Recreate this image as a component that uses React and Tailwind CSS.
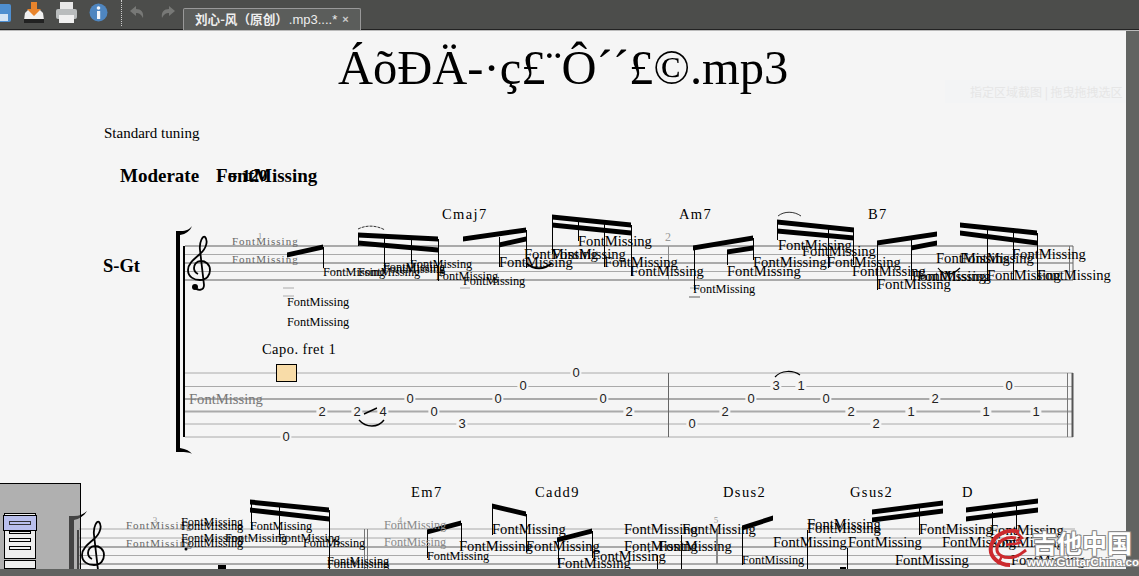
const S = 'S', L = 'L';
const texts = [
  // row 1
  [323,272,S],[358,272,S],[383,269,S],[383,267,S],[410,264,S],[436,276,S],[463,281,S],[287,302,S],[287,322,S],
  [578,241,L],[524,254,L],[552,254,L],[499,262,L],[604,262,L],[630,271,L],[727,271,L],[753,262,L],[693,289,S],
  [778,245,L],[802,251,L],[827,262,L],[852,271,L],[877,284,L],[912,276,L],[917,276,L],[936,258,L],[960,258,L],[1012,254,L],[987,275,L],[1037,275,L],
  // row 2
  [181,522,S],[181,526,S],[181,538,S],[181,543,S],[225,538,S],[250,526,S],[278,538,S],[303,543,S],[327,561,S],[327,564,S],
  [427,556,S],[492,529,L],[459,546,L],[526,546,L],[557,563,L],[592,556,L],[624,529,L],[682,529,L],[624,546,L],[658,546,L],[742,560,S],
  [773,542,L],[807,524,L],[807,528,L],[848,542,L],[895,560,L],[919,529,L],[942,542,L],[990,530,L],[990,542,L],[1011,560,L],
];
const grayTexts = [[189,399,'text-[14.6px] text-[#777]'],[384,525,'text-[12.3px] text-[#888]'],[384,542,'text-[12.3px] text-[#888]']];
const monoTexts = [[232,241],[232,259],[126,525],[126,543]];
const chords = [['Cmaj7',442,214],['Am7',679,214],['B7',868,214],['Em7',411,492],['Cadd9',535,492],['Dsus2',723,492],['Gsus2',850,492],['D',962,492]];
const frets = [
  ['0',576,372],['0',523,385],['0',410,398],['0',498,398],['0',603,398],['2',322,411],['2',357,411],['4',383,411],['0',434,411],['2',629,411],['3',462,423],['0',286,436],
  ['3',776,385],['1',801,385],['0',751,398],['0',826,398],['2',725,411],['0',692,423],['2',851,411],['2',876,423],['1',911,411],['2',935,398],['1',986,411],['1',1036,411],['0',1009,385],
];
const beams = [
  [287,255,323,247],[358,235,438,239],[358,243,438,250],[463,239,526,230],[499,245,526,239],[552,217,631,225],[552,225,631,233],
  [693,248,753,238],[727,252,753,248],[777,222,854,230],[777,231,854,238],[877,243,937,234],[911,248,937,243],[960,225,1037,233],[960,233,1037,243],
  [250,502,329,510],[250,510,329,519],[427,532,461,523],[492,506,526,514],[557,540,592,531],[742,528,773,518],
  [872,512,943,503],[872,520,943,511],[966,510,1038,501],[966,519,1038,510],
];
const stems = [
  [323,247,268],[358,235,246],[384,238,268],[411,240,264],[438,239,281],[499,237,267],[526,230,268],[552,217,254],[578,220,241],[604,222,267],[631,225,276],
  [694,248,290],[727,250,265],[753,238,260],[777,222,240],[828,227,268],[853,230,265],[877,243,290],[911,240,280],[987,230,280],[1013,231,280],[1037,233,280],
  [251,502,530],[279,506,535],[329,510,569],[427,532,558],[461,523,550],[492,506,535],[526,514,552],[558,540,565],[592,531,558],[657,555,569],[681,535,569],[742,528,565],[919,507,535],[992,512,535],[1016,505,535],[807,530,569],[847,548,569],
];
const staff1 = [[246,1.8],[254.5,1],[263,1.8],[271.5,1],[280,1.8]];
const tab = [[373,1],[386.5,1],[399,1.8],[411.5,1.8],[424,1],[437,1]];
const staff2 = [[529,1.2],[538,1],[547,1.8],[555.5,1],[564,1.8]];
const clef = 'M195 287C197 291 204 291 204 285L200 250C199 242 203 235 205 237C208 240 207 248 200 254C193 260 188 264 188 270C188 277 194 280 200 280C207 280 210 275 210 270C210 264 205 261 201 261C196 261 194 265 194 268C194 271 196 273 198 274';

function At({ x, y, className = '', children, center }) {
  return (
    <span
      className={`absolute whitespace-nowrap leading-none ${center ? '-translate-x-1/2 -translate-y-1/2' : '-translate-y-1/2'} ${className}`}
      style={{ left: x, top: y - 31 }}
    >
      {children}
    </span>
  );
}

function Score() {
  return (
    <svg className="absolute left-0 top-0" width="1126" height="538" viewBox="0 31 1126 538" fill="none">
      {staff1.map(([y, w]) => <line key={y} x1="185" x2="1073" y1={y} y2={y} stroke="#aaa" strokeWidth={w} />)}
      {tab.map(([y, w]) => <line key={y} x1="185" x2="1073" y1={y} y2={y} stroke="#aaa" strokeWidth={w} />)}
      {staff2.map(([y, w]) => <line key={y} x1="79" x2="1075" y1={y} y2={y} stroke="#aaa" strokeWidth={w} />)}
      {/* brackets */}
      <path d="M176 231H181C186 231 190 229 192 226C190 231 186 234 180 235V448C186 449 190 451 192 454C189 452 184 452 176 452Z" fill="#000" />
      <rect x="183" y="246" width="2" height="191" fill="#000" />
      <path d="M69 516H74C79 516 84 514 87 511C84 516 79 519 74 520V569H69Z" fill="#000" />
      <rect x="77" y="530" width="2" height="39" fill="#000" />
      {/* clefs */}
      <path d={clef} stroke="#000" strokeWidth="1.8" />
      <circle cx="195" cy="287" r="3" fill="#000" />
      <g transform="translate(-106 285)">
        <path d={clef} stroke="#000" strokeWidth="1.8" />
      </g>
      {/* bar lines */}
      <line x1="668.5" x2="668.5" y1="373" y2="437" stroke="#666" />
      <line x1="668.5" x2="668.5" y1="246" y2="280" stroke="#888" />
      <line x1="1067.5" x2="1067.5" y1="373" y2="437" stroke="#777" />
      <line x1="1072.5" x2="1072.5" y1="373" y2="437" stroke="#555" strokeWidth="2" />
      <line x1="1069.5" x2="1069.5" y1="246" y2="280" stroke="#777" />
      <line x1="1073" x2="1073" y1="246" y2="280" stroke="#666" />
      <line x1="364.5" x2="364.5" y1="529" y2="569" stroke="#777" />
      <line x1="367.5" x2="367.5" y1="529" y2="569" stroke="#777" />
      <line x1="717" x2="717" y1="529" y2="564" stroke="#888" strokeWidth="2" />
      {/* ledger lines */}
      {[[283,294,288],[283,294,296],[460,470,288],[690,700,288]].map(([a, b, y]) => <line key={a + '' + y} x1={a} x2={b} y1={y} y2={y} stroke="#aaa" />)}
      <line x1="689" x2="700" y1="297" y2="297" stroke="#aaa" strokeWidth="2" />
      {/* stems */}
      {stems.map(([x, a, b]) => <line key={x + '-' + a} x1={x + 0.5} x2={x + 0.5} y1={a} y2={b} stroke="#000" />)}
      {/* beams */}
      {beams.map(([a, b, c, d]) => <polygon key={a + '-' + b} points={`${a},${b - 2.5} ${c},${d - 2.5} ${c},${d + 2.5} ${a},${b + 2.5}`} fill="#000" />)}
      {/* ties */}
      <path d="M358 229C366 225 376 225 385 230" stroke="#000" strokeWidth="0.8" strokeDasharray="3 1" />
      <path d="M778 216C784 211 794 211 801 216" stroke="#000" strokeWidth="0.8" />
      <path d="M775 377C781 370 793 370 800 375" stroke="#000" strokeWidth="1.2" />
      <path d="M359 420C366 428 378 428 384 420" stroke="#000" strokeWidth="1.4" />
      <path d="M364 414L377 408" stroke="#000" strokeWidth="1.4" />
      <path d="M526 263C534 270 544 270 552 263" stroke="#000" strokeWidth="2" />
      <path d="M938 268C944 276 952 276 960 268" stroke="#000" strokeWidth="1.2" />
      {/* rests and dots */}
      <rect x="218" y="565" width="8" height="4" fill="#000" />
      <rect x="840" y="567" width="6" height="2" fill="#000" />
      <circle cx="186" cy="549" r="1.5" fill="#000" />
    </svg>
  );
}

function FileBox() {
  return (
    <div className="absolute left-0 bottom-0 h-[86px] w-[81px] border-t border-r border-black bg-[#797979]/[0.56]">
      <div className="absolute left-[4px] top-[29px] flex h-[46px] w-[32px] flex-col items-center gap-[4px] border border-black bg-[#eeeeee] pt-[17px]">
        <div className="h-[3px] w-[22px] border border-black" />
        <div className="h-[4px] w-[22px] border border-black" />
        <div className="h-[4px] w-[22px] border border-black" />
      </div>
      <div className="absolute left-[3px] top-[31px] flex h-[16px] w-[34px] items-center justify-center border border-black bg-[#b9bfec]">
        <div className="h-[4px] w-[22px] border border-[#333]" />
      </div>
      <div className="absolute left-[4px] bottom-0 h-[9px] w-[32px] border border-black bg-[#eeeeee]" />
    </div>
  );
}

function Logo() {
  return (
    <div className="absolute left-[986px] top-[526px] h-[44px] w-[150px]">
      <svg className="absolute left-0 top-0" width="48" height="44" viewBox="0 0 48 44" fill="none">
        <path d="M33 6C21 2 7 9 5 21C3 31 13 39 24 39" stroke="#cc2a2e" strokeWidth="4" />
        <path d="M30 12C20 10 12 15 11 22C10 29 18 33 28 31C33 30 36 27 40 24" stroke="#cc2a2e" strokeWidth="3" />
        <path d="M20 19C25 17 31 19 35 16M30 6L36 12L30 15M16 30L12 38" stroke="#cc2a2e" strokeWidth="2.5" />
      </svg>
      <span className="absolute left-[46px] top-[1px] whitespace-nowrap font-['Noto_Sans_CJK_SC',sans-serif] text-[25px] font-bold leading-[30px] text-white [text-shadow:1px_1px_0_#888,-1px_-1px_0_#888,1px_-1px_0_#888,-1px_1px_0_#888]">吉他中国</span>
      <span className="absolute left-[41px] top-[30px] whitespace-nowrap font-['Liberation_Sans',sans-serif] text-[11.5px] font-bold leading-[12px] text-white [text-shadow:1px_1px_0_#888,-1px_-1px_0_#888,1px_-1px_0_#888,-1px_1px_0_#888]">www.GuitarChina.com</span>
    </div>
  );
}

function Toolbar() {
  return (
    <div className="flex h-[30px] items-start bg-[#4c4d4b] border-b border-[#222]">
      <svg className="mt-[3px]" width="12" height="20" viewBox="0 0 12 20">
        <rect x="-6" y="1" width="17" height="18" rx="2" fill="#4f8fd0" />
        <rect x="-4" y="11" width="12" height="7" fill="#d5e4f4" />
      </svg>
      <svg className="ml-[11px] mt-[1px]" width="22" height="23" viewBox="0 0 22 23">
        <path d="M2 12L5 9H17L20 12L21 19H1Z" fill="#f1f1f1" />
        <rect x="1" y="18" width="20" height="4" fill="#222" />
        <path d="M8 1H14V8H18L11 15L4 8H8Z" fill="#e8842c" />
      </svg>
      <svg className="ml-[10px] mt-[1px]" width="23" height="23" viewBox="0 0 23 23">
        <rect x="5" y="1" width="13" height="8" fill="#e8e8e8" />
        <rect x="1" y="8" width="21" height="10" rx="2" fill="#b9bcbd" />
        <rect x="4" y="14" width="15" height="8" fill="#f0f0f0" />
      </svg>
      <svg className="ml-[11px] mt-[3px]" width="19" height="19" viewBox="0 0 19 19">
        <circle cx="9.5" cy="9.5" r="9" fill="#4f86c0" />
        <circle cx="9.5" cy="5" r="1.8" fill="#f4f6fa" />
        <rect x="8" y="8" width="3.2" height="8" fill="#f4f6fa" />
      </svg>
      <div className="ml-[13px] h-[26px] w-0 border-l border-dotted border-[#cccccc]" />
      <svg className="ml-[7px] mt-[5px]" width="16" height="14" viewBox="0 0 16 14">
        <path d="M7 1L1 6L7 11V8C10 8 12 9 14 13C15 7 12 4 7 4Z" fill="#777876" />
      </svg>
      <svg className="ml-[15px] mt-[5px]" width="16" height="14" viewBox="0 0 16 14">
        <path d="M9 1L15 6L9 11V8C6 8 4 9 2 13C1 7 4 4 9 4Z" fill="#777876" />
      </svg>
      <div className="ml-[7px] mt-[8px] flex h-[22px] w-[178px] items-center rounded-t-[2px] border border-b-0 border-[#999] bg-[#5b5d5b] pl-[11px] text-[13px] text-[#eeeeee] font-['Liberation_Sans','Noto_Sans_CJK_SC',sans-serif]">
        <span className="text-[12.6px] font-bold font-['Noto_Sans_CJK_SC',sans-serif]">刘心-风（原创）</span>
        <span className="ml-[1px]">.mp3....*</span>
        <span className="ml-[5px] text-[11px] font-bold text-[#cccccc]">×</span>
      </div>
    </div>
  );
}

export default function App() {
  return (
    <div className="relative flex h-[576px] w-[1139px] flex-col overflow-hidden bg-[#616361] font-['Liberation_Serif',serif]">
      <Toolbar />
      <div className="h-[1px] bg-[#bbbbbb]" />
      <div className="flex flex-1">
        <div className="relative flex-1 overflow-hidden bg-[#f5f5f5] text-black">
          <Score />
          <div className="absolute left-[945px] top-[49px] flex h-[23px] w-[181px] items-center bg-[#f3f4f5] pl-[25px] font-['Noto_Sans_CJK_SC',sans-serif] text-[12px] text-[#e6e6e6] whitespace-nowrap">指定区域截图 | 拖曳拖拽选区</div>

          <At x={338} y={68} className="text-[48.5px]">ÁõÐÄ-·ç£¨Ô´´£©.mp3</At>
          <At x={104} y={133} className="text-[15px]">Standard tuning</At>
          <At x={120} y={175} className="text-[19px] font-bold">Moderate</At>
          <At x={216} y={175} className="text-[19px] font-bold">FontMissing</At>
          <At x={228} y={175} className="text-[17px] font-bold">= 120</At>
          <At x={103} y={266} className="text-[18.5px] font-bold">S-Gt</At>
          <At x={262} y={349} className="text-[14.5px] tracking-[0.45px]">Capo. fret 1</At>
          <At x={668} y={237} center className="text-[12px] text-[#999]">2</At>
          <At x={260} y={236} center className="text-[9px] text-[#999]">1</At>
          <At x={155} y={520} center className="text-[9px] text-[#999]">3</At>
          <At x={400} y={520} center className="text-[9px] text-[#999]">4</At>
          <At x={716} y={520} center className="text-[9px] text-[#999]">5</At>

          {chords.map(([t, x, y]) => (
            <At key={t} x={x} y={y} className="text-[14.5px] tracking-[1.4px]">{t}</At>
          ))}
          {monoTexts.map(([x, y]) => (
            <At key={x + '-' + y} x={x} y={y} className="text-[11px] tracking-[1px] text-[#666]">FontMissing</At>
          ))}
          {grayTexts.map(([x, y, c]) => (
            <At key={x + '-' + y} x={x} y={y} className={c}>FontMissing</At>
          ))}
          {texts.map(([x, y, s]) => (
            <At key={x + '-' + y} x={x} y={y} className={s === L ? 'text-[14.6px]' : 'text-[12.3px]'}>FontMissing</At>
          ))}

          <div className="absolute left-[276px] top-[333px] h-[18px] w-[21px] border border-black bg-[#f8dca8]" />

          {frets.map(([t, x, y]) => (
            <At key={x + '-' + y} x={x} y={y} center className="bg-[#f5f5f5] px-[2px] font-['Liberation_Sans',sans-serif] text-[13px] text-[#222]">{t}</At>
          ))}

          <FileBox />
        </div>
        <div className="w-[13px] bg-[#616361]" />
      </div>
      <div className="h-[7px] bg-[#616361]" />
      <Logo />
    </div>
  );
}
